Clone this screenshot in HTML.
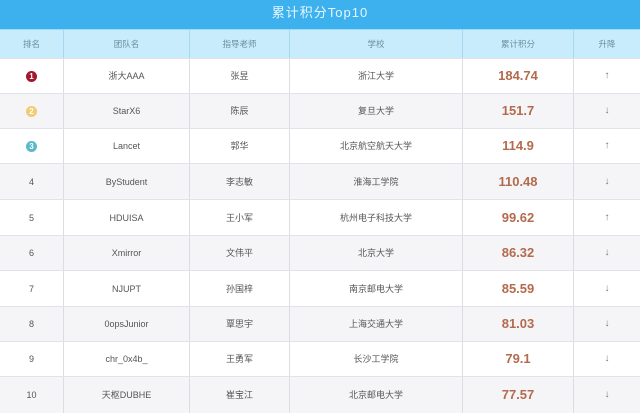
<!DOCTYPE html>
<html><head><meta charset="utf-8"><style>
*{margin:0;padding:0;box-sizing:border-box}
body{width:640px;height:413px;overflow:hidden;background:#fff;font-family:"Liberation Sans","Noto Sans CJK SC",sans-serif;position:relative}
.title{position:absolute;left:0;top:0;width:640px;height:29px;background:#3db1ee;color:#e6f6ff;font-size:13px;text-align:center;line-height:26px;letter-spacing:1px}
.hdr{position:absolute;left:0;top:29px;width:640px;height:29px;background:#c9ecfc;border-top:1px solid #9fdaf5}
.row{position:absolute;left:0;width:640px;border-top:1px solid #e2e2ea}
.c{position:absolute;top:0;height:100%;display:flex;align-items:center;justify-content:center;font-size:9px;line-height:14px;color:#555}
.c span{display:block;line-height:14px;height:14px}
.hdr .c{color:#6a8ea0;font-size:8.5px}
.b{border-left:1px solid #dcdce4}
.hdr .b{border-left:1px solid #a8d8ee}
.s{color:#b46a4c;font-weight:bold;font-size:13px}
.s span{line-height:16px;height:16px}
.a{color:#777;font-size:10px}
.m{width:11px;height:11px;border-radius:50%;color:#fff;font-size:8px;font-weight:bold;display:flex;align-items:center;justify-content:center;line-height:11px}
</style></head><body>
<div class="title">累计积分Top10</div>
<div class="hdr">
<div class="c" style="left:0;width:63px">排名</div>
<div class="c b" style="left:63px;width:126px">团队名</div>
<div class="c b" style="left:189px;width:100px">指导老师</div>
<div class="c b" style="left:289px;width:173px">学校</div>
<div class="c b" style="left:462px;width:111px">累计积分</div>
<div class="c b" style="left:573px;width:67px">升降</div>
</div>
<div id="rows"></div>
<script>
var d=[["1","浙大AAA","张昱","浙江大学","184.74","↑"],["2","StarX6","陈辰","复旦大学","151.7","↓"],["3","Lancet","郭华","北京航空航天大学","114.9","↑"],["4","ByStudent","李志敏","淮海工学院","110.48","↓"],["5","HDUISA","王小军","杭州电子科技大学","99.62","↑"],["6","Xmirror","文伟平","北京大学","86.32","↓"],["7","NJUPT","孙国梓","南京邮电大学","85.59","↓"],["8","0opsJunior","覃思宇","上海交通大学","81.03","↓"],["9","chr_0x4b_","王勇军","长沙工学院","79.1","↓"],["10","天枢DUBHE","崔宝江","北京邮电大学","77.57","↓"]];
var tops=[58,93,128,163,199,235,270,306,341,376,413];
var mc=["#a3172f","#f2cb73","#5bb9c9"];
var h="";
d.forEach(function(r,i){
var rk=i<3?'<div class="m" style="background:'+mc[i]+'">'+(i+1)+'</div>':'<span>'+r[0]+'</span>';
h+='<div class="row" style="top:'+tops[i]+'px;height:'+(tops[i+1]-tops[i])+'px;background:'+(i%2?'#f5f5f8':'#fff')+'">'+
'<div class="c" style="left:0;width:63px">'+rk+'</div>'+
'<div class="c b" style="left:63px;width:126px"><span>'+r[1]+'</span></div>'+
'<div class="c b" style="left:189px;width:100px"><span>'+r[2]+'</span></div>'+
'<div class="c b" style="left:289px;width:173px"><span>'+r[3]+'</span></div>'+
'<div class="c b s" style="left:462px;width:111px"><span>'+r[4]+'</span></div>'+
'<div class="c b a" style="left:573px;width:67px"><span>'+r[5]+'</span></div></div>';
});
document.getElementById("rows").innerHTML=h;
</script>
</body></html>
